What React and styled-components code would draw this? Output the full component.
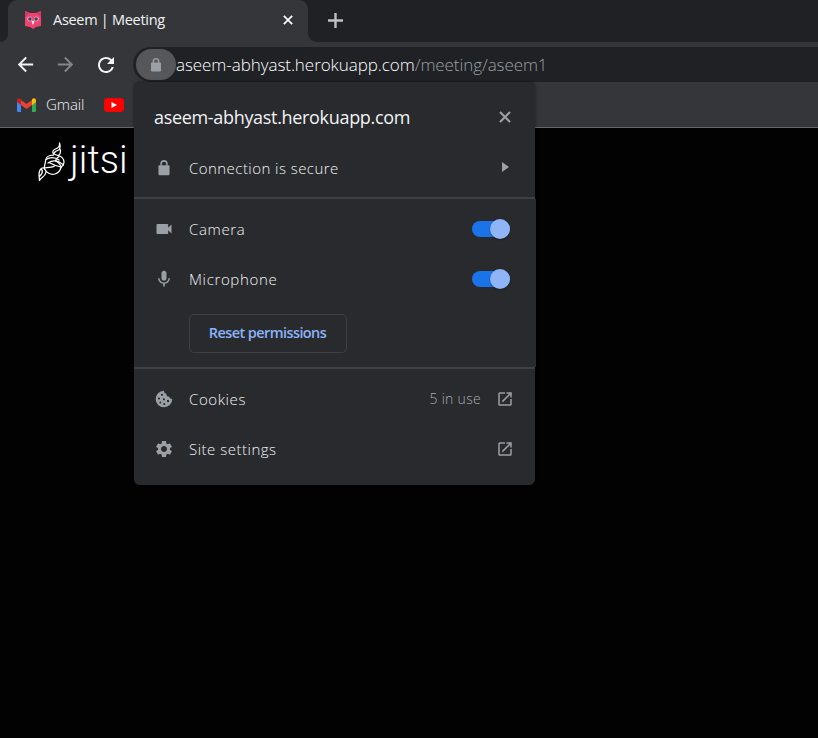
import React from 'react';
import styled, { createGlobalStyle } from 'styled-components';
import {
  MdArrowBack, MdArrowForward, MdRefresh, MdVideocam,
  MdMic, MdSettings, MdOpenInNew,
} from 'react-icons/md';

const GlobalStyle = createGlobalStyle`
  * { box-sizing: border-box; }
  body { margin: 0; background: #020202; overflow: hidden; }
`;

const Browser = styled.div`
  position: relative;
  width: 818px;
  height: 738px;
  overflow: hidden;
  background: #020202;
  color: #e8eaed;
  font-family: "Open Sans", "Noto Sans", sans-serif;
  font-size: 15px;
  font-weight: 300;
  svg { display: block; flex: none; }
`;

const Label = styled.span`
  font-size: ${(p) => p.$size || 15}px;
  font-weight: ${(p) => p.$weight || 300};
  letter-spacing: ${(p) => p.$track || 0}px;
  color: ${(p) => p.$color || '#f1f3f5'};
  line-height: 20px;
  white-space: nowrap;
`;

const TabStrip = styled.header`
  display: flex;
  height: 42px;
  background: #35363a;
`;

const StripEdge = styled.div`
  width: 8px;
  background: #202124;
  border-bottom-right-radius: 8px;
`;

const TabShell = styled.div`
  width: 300px;
  background: #202124;
`;

const Tab = styled.div`
  display: flex;
  align-items: center;
  height: 42px;
  padding: 0 15px 2px 17px;
  border-radius: 9px 9px 0 0;
  background: #35363a;
`;

const TabTitle = styled.div`
  flex: 1;
  display: flex;
  padding-left: 12px;
`;

const StripRest = styled.div`
  flex: 1;
  padding: 13px 0 0 20px;
  background: #202124;
  border-bottom-left-radius: 9px;
`;

const Toolbar = styled.div`
  display: flex;
  align-items: center;
  height: 45px;
  padding-left: 14px;
  background: #35363a;
`;

const NavButton = styled.div`
  width: 40px;
  color: ${(p) => (p.$muted ? '#85868a' : '#f1f3f4')};
`;

const AddressBar = styled.div`
  display: flex;
  align-items: center;
  flex: 1;
  height: 35px;
  padding-left: 3px;
  margin: 0 0 0 -1px;
  background: #202124;
  border-radius: 18px 0 0 18px;
`;

const SiteChip = styled.div`
  display: grid;
  place-items: center;
  width: 40px;
  height: 31px;
  border-radius: 16px;
  background: #56575a;
`;

const Bookmarks = styled.div`
  display: flex;
  align-items: center;
  height: 41px;
  padding: 0 0 5px 17px;
  background: #35363a;
  border-bottom: 1px solid #66676a;
`;

const BookmarkName = styled.div`
  display: flex;
  width: 68px;
  padding: 0 0 1px 10px;
`;

const MeetingPage = styled.main`
  display: flex;
  height: 610px;
  padding: 12px 0 0 36px;
  background: #020202;
`;

const LogoWord = styled.div`
  font-family: Roboto, "Open Sans", sans-serif;
  font-size: 38px;
  font-weight: 300;
  letter-spacing: 0.1px;
  line-height: 40px;
  margin: 0 0 0 4px;
  color: #fff;
`;

const SitePopup = styled.section`
  position: absolute;
  left: 134px;
  top: 82px;
  width: 401px;
  height: 403px;
  border-radius: 6px;
  background: #292a2d;
  box-shadow: 0 0 3px rgba(0, 0, 0, 0.5);
`;

const PopupGroup = styled.div`
  height: ${(p) => p.$height}px;
  width: ${(p) => p.$width || 401}px;
  padding-top: ${(p) => p.$top || 0}px;
  background: #292a2d;
  border-radius: ${(p) => p.$round || '0'};
`;

const Divider = styled.hr`
  height: 2px;
  margin: 0;
  border: 0;
  background: #3f4043;
`;

const PopupTitle = styled.div`
  display: flex;
  align-items: center;
  justify-content: space-between;
  height: 70px;
  padding: 0 24px 0 20px;
`;

const Row = styled.div`
  display: flex;
  align-items: center;
  width: 401px;
  height: ${(p) => p.$height || 50}px;
  padding: 0 21px 0 20px;
  color: #9aa0a6;
`;

const RowName = styled.div`
  flex: 1;
  display: flex;
  padding-left: 15px;
`;

const RowEnd = styled.div`
  display: flex;
  align-items: center;
  gap: 15px;
  margin: 0 ${(p) => p.$inset || 0}px ${(p) => p.$lift || 0}px 0;
`;

const Switch = styled.div`
  display: flex;
  align-items: center;
  justify-content: flex-end;
  width: 38px;
  height: 16px;
  margin-right: 4px;
  border-radius: 8px;
  background: #1a73e8;
`;

const Knob = styled.div`
  width: 20px;
  height: 20px;
  flex: none;
  border-radius: 50%;
  background: #8fb5f8;
  box-shadow: 0 1px 2px rgba(0, 0, 0, 0.35);
`;

const ResetButton = styled.button`
  display: grid;
  place-items: center;
  width: 158px;
  height: 39px;
  margin: 10px 0 0 55px;
  padding: 0 1px 2px 0;
  border: 1px solid #3f4043;
  border-radius: 5px;
  background: transparent;
  font-family: inherit;
`;

const Cross = ({ size, color }) => (
  <svg width={size} height={size} viewBox="0 0 12 12" stroke={color} strokeWidth="2.1">
    <path d="M1 1l10 10M11 1L1 11" />
  </svg>
);

const Plus = () => (
  <svg width="15" height="15" viewBox="0 0 15 15" stroke="#bdc0c4" strokeWidth="2.4">
    <path d="M7.5 0v15M0 7.5h15" />
  </svg>
);

const Cookie = () => (
  <svg width="20" height="20" viewBox="0 0 20 20">
    <path d="M9.8 1.700a8.300 8.300 0 1 0 8.500 8.300 3.300 3.300 0 0 1-3.200-2.200 3 3 0 0 1-2.800-3 3.300 3.300 0 0 1-2.500-3.100z" fill="#9aa0a6" />
    <g fill="#292a2d">
      <circle cx="8" cy="5.8" r="1.1" />
      <circle cx="5" cy="9.500" r="1.1" />
      <circle cx="9.900" cy="10.300" r="1.1" />
      <circle cx="14" cy="12" r="1.2" />
      <circle cx="6.300" cy="13.500" r="1" />
      <circle cx="10.300" cy="15" r="1.1" />
    </g>
  </svg>
);

const Lock = ({ size = 18 }) => (
  <svg width={size} height={size} viewBox="0 0 18 18">
    <path d="M6.400 7V5.200a2.600 2.600 0 0 1 5.200 0V7" fill="none" stroke="#9aa0a6" strokeWidth="1.4" />
    <rect x="4" y="6.500" width="10" height="9" rx="1" fill="#9aa0a6" />
  </svg>
);

const Owl = () => (
  <svg width="16" height="18" viewBox="0 0 16 18">
    <path d="M0 0l5 2h6l5-2v15l-5 1-3 2-3-2-5-1z" fill="#ef426f" />
    <path d="M0 0l5 2-5 4zM16 0l-5 2 5 4z" fill="#d93763" />
    <circle cx="4.700" cy="8" r="2.500" fill="#eaa9c0" />
    <circle cx="11.300" cy="8" r="2.500" fill="#eaa9c0" />
    <circle cx="4.900" cy="8" r="1.700" fill="#343f6b" />
    <circle cx="11.100" cy="8" r="1.700" fill="#343f6b" />
    <path d="M6.600 10.500L8 9.500l1.400 1L8 14z" fill="#fff" />
  </svg>
);

const GmailMark = () => (
  <svg width="19" height="14" viewBox="0 0 19 14">
    <path d="M0 3h4v11H1.300A1.300 1.300 0 0 1 0 12.700z" fill="#4285f4" />
    <path d="M15 3h4v9.700a1.300 1.300 0 0 1-1.300 1.300H15z" fill="#34a853" />
    <path d="M4 2l5.500 4L15 2v5l-5.500 4L4 7z" fill="#ea4335" />
    <path d="M0 2.500C0 .3 2-.5 3.500.7L4 1v6L0 4z" fill="#c5221f" />
    <path d="M19 2.500C19 .3 17-.5 15.500.7L15 1v6l4-3z" fill="#fbbc04" />
  </svg>
);

const YouTubeMark = () => (
  <svg width="20" height="14" viewBox="0 0 20 14">
    <rect width="20" height="14" rx="3.500" fill="#f00" />
    <path d="M7.500 4l5.500 3-5.500 3z" fill="#fff" />
  </svg>
);

const JitsiMark = () => (
  <svg width="30" height="42" viewBox="0 0 30 42" fill="none" stroke="#fff" strokeWidth="1.25" strokeLinejoin="round" strokeLinecap="round">
    <path d="M23.500 3c.5 4-1.500 5-4 6-2.500 1.200-3.500 2.500-2 5l4.500 1.500c2.500-1 3-4 2-6.500M23.500 3c1 2 .8 4.500 0 6.500l-4 2-2 2.500" />
    <path d="M17.500 15c-5 0-8 2.500-8 6s-1.500 4-1 7" />
    <path d="M22 15.500c4 1 6 4 6 7 0 2-1.500 3.500-3 5" />
    <path d="M10 19.500c5-3 9-2.500 13 .5M23 16.500c-3 2-4 3-3 5M12 23c5-3.500 10-3 15.500 2M14 23c3.500 2 7 3 11 4" />
    <path d="M8.500 28c5-1 8 0 10-2M8 28c2 5 7 7 11 6 3-.7 5-3 6-6.500M20 21c3 2 5 4 5 6.500" />
    <path d="M8.500 28c-4-1-5.500 3-5.500 7l.5 5.500c1-3 6-3.500 6.500-8.500M5.500 29.500c2 2 0 5-2 7" />
  </svg>
);

const Caret = () => (
  <svg width="8" height="10" viewBox="0 0 8 10">
    <path d="M0 0l7 5-7 5z" fill="#9aa0a6" />
  </svg>
);

export default function App() {
  return (
    <>
      <GlobalStyle />
      <Browser>
        <TabStrip>
          <StripEdge />
          <TabShell>
            <Tab>
              <Owl />
              <TabTitle><Label $size={14.5} $weight={400} $track={-0.29}>Aseem | Meeting</Label></TabTitle>
              <Cross size={10} color="#fff" />
            </Tab>
          </TabShell>
          <StripRest><Plus /></StripRest>
        </TabStrip>
        <Toolbar>
          <NavButton><MdArrowBack size={23} /></NavButton>
          <NavButton $muted><MdArrowForward size={23} /></NavButton>
          <NavButton><MdRefresh size={24} /></NavButton>
          <AddressBar>
            <SiteChip><Lock /></SiteChip>
            <Label $size={17} $track={-0.06} $color="#fff">aseem-abhyast.herokuapp.com</Label>
            <Label $size={17} $track={-0.08} $color="#9aa0a6">/meeting/aseem1</Label>
          </AddressBar>
        </Toolbar>
        <Bookmarks>
          <GmailMark />
          <BookmarkName><Label $size={15} $track={-0.1}>Gmail</Label></BookmarkName>
          <YouTubeMark />
        </Bookmarks>
        <MeetingPage>
          <JitsiMark />
          <LogoWord>jitsi</LogoWord>
        </MeetingPage>

        <SitePopup>
          <PopupGroup $height={115} $round="6px 6px 0 0">
            <PopupTitle>
              <Label $size={18} $weight={400} $track={-0.32}>aseem-abhyast.herokuapp.com</Label>
              <Cross size={12} color="#9aa0a6" />
            </PopupTitle>
            <Row $height={32}>
              <Lock size={20} />
              <RowName><Label $track={0.45}>Connection is secure</Label></RowName>
              <RowEnd $inset={4} $lift={2}><Caret /></RowEnd>
            </Row>
          </PopupGroup>
          <Divider />
          <PopupGroup $height={168} $width={402} $top={5}>
            <Row>
              <MdVideocam size={20} />
              <RowName><Label $track={0.65}>Camera</Label></RowName>
              <Switch><Knob /></Switch>
            </Row>
            <Row>
              <MdMic size={20} />
              <RowName><Label $track={0.65}>Microphone</Label></RowName>
              <Switch><Knob /></Switch>
            </Row>
            <ResetButton><Label $weight={600} $size={14.5} $track={-0.58} $color="#8ab4f8">Reset permissions</Label></ResetButton>
          </PopupGroup>
          <Divider />
          <PopupGroup $height={116} $top={5} $round="0 0 6px 6px">
            <Row>
              <Cookie />
              <RowName><Label $track={0.6}>Cookies</Label></RowName>
              <RowEnd>
                <Label $size={14} $track={0.3} $color="#a4a9af">5 in use</Label>
                <MdOpenInNew size={18} />
              </RowEnd>
            </Row>
            <Row>
              <MdSettings size={20} />
              <RowName><Label $track={0.5}>Site settings</Label></RowName>
              <MdOpenInNew size={18} />
            </Row>
          </PopupGroup>
        </SitePopup>
      </Browser>
    </>
  );
}
